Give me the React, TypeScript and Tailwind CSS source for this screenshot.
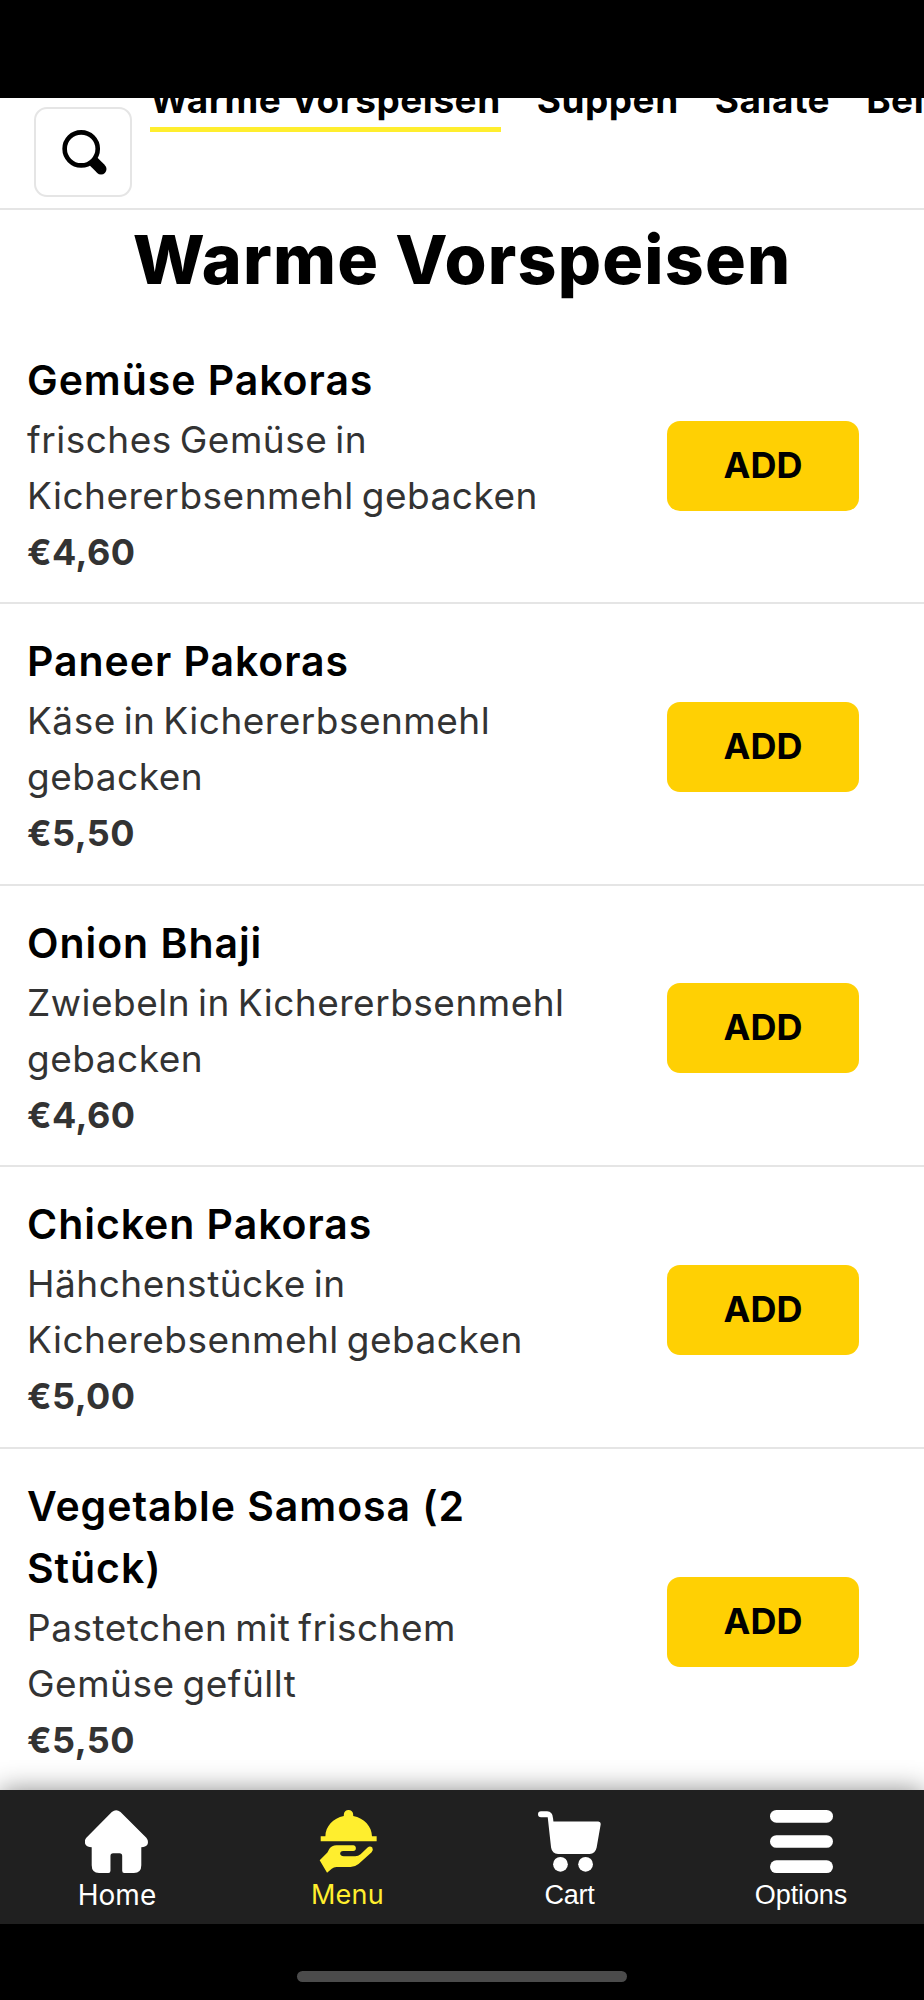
import { useState } from "react";

type Dish = {
  name: string[];
  description: string[];
  price: string;
};

const categories = ["Warme Vorspeisen", "Suppen", "Salate", "Beilagen"];

const dishes: Dish[] = [
  { name: ["Gemüse Pakoras"], description: ["frisches Gemüse in", "Kichererbsenmehl gebacken"], price: "€4,60" },
  { name: ["Paneer Pakoras"], description: ["Käse in Kichererbsenmehl", "gebacken"], price: "€5,50" },
  { name: ["Onion Bhaji"], description: ["Zwiebeln in Kichererbsenmehl", "gebacken"], price: "€4,60" },
  { name: ["Chicken Pakoras"], description: ["Hähchenstücke in", "Kicherebsenmehl gebacken"], price: "€5,00" },
  { name: ["Vegetable Samosa (2", "Stück)"], description: ["Pastetchen mit frischem", "Gemüse gefüllt"], price: "€5,50" },
];

function SearchIcon() {
  return (
    <svg viewBox="0 0 136 136" className="ml-0.5 h-[45px] w-[45px]" fill="none" stroke="black">
      <circle cx="58" cy="57" r="50" strokeWidth="14" />
      <path d="M94 94L117 117" strokeWidth="33" />
      <circle cx="118" cy="118" r="8.5" strokeWidth="16" />
    </svg>
  );
}

function HomeIcon() {
  return (
    <svg viewBox="0 0 188 188" className="mr-0.5 h-[63px] w-[63px]" fill="currentColor">
      <path d="M80 6Q93 -5 106 6L183 83Q191 93 186 104Q181 111 168 111V165Q168 188 146 188H117Q111 188 111 181V137Q111 129 103 129H84Q76 129 76 137V181Q76 188 70 188H42Q20 188 20 165V111Q6 111 2 104Q-4 93 4 83Z" />
    </svg>
  );
}

function MenuIcon() {
  return (
    <svg viewBox="949 120 188 188" className="h-[63px] w-[63px]" fill="currentColor">
      <path d="M1032 138V134A14 14 0 0 1 1060 134V138C1093 144 1116 170 1116 198H1130V213H963V198H977C977 170 1000 144 1032 138Z" />
      <path d="M960 270L983 247L989 236Q996 225 1010 225H1060Q1068 226 1068 234Q1068 242 1060 242H1030Q1021 243 1021 250Q1022 258 1032 258H1066Q1075 258 1082 252L1103 232Q1110 226 1117 232Q1121 239 1115 246L1076 281Q1065 290 1052 290H1010Q1002 290 996 295L982 307Z" />
    </svg>
  );
}

function CartIcon() {
  return (
    <svg viewBox="228 120 188 188" className="h-[63px] w-[63px]" fill="currentColor">
      <path d="M237 124H255Q272 125 273 145L274 154H408Q416 155 415 163L403 232Q399 251 382 251H288Q270 251 267 232L257 142H237A9 9 0 0 1 237 124Z" />
      <circle cx="295" cy="282" r="22" />
      <circle cx="370" cy="282" r="22" />
    </svg>
  );
}

function OptionsIcon() {
  return (
    <svg viewBox="0 0 188 188" className="h-[63px] w-[63px]" fill="currentColor">
      <rect width="188" height="38" rx="19" />
      <rect y="75" width="188" height="38" rx="19" />
      <rect y="150" width="188" height="38" rx="19" />
    </svg>
  );
}

const navItems = [
  { label: "Home", icon: HomeIcon, className: "w-20 text-[28px]" },
  { label: "Menu", icon: MenuIcon, className: "w-[73px] text-[27px] tracking-[0.3px]" },
  { label: "Cart", icon: CartIcon, className: "w-[63px] text-[27px] tracking-[-0.2px] font-['Liberation_Sans',sans-serif]" },
  { label: "Options", icon: OptionsIcon, className: "w-[92px] text-[27px] tracking-[-0.1px] font-['Liberation_Sans',sans-serif]" },
];

function DishRow({ dish }: { dish: Dish }) {
  return (
    <li className="flex items-center justify-between border-b-2 border-[#e5e5e5] pt-[26px] pr-[65px] pb-[22.4px] pl-[27px] last:border-b-0">
      <div className="whitespace-nowrap">
        <h2 className="pb-px text-[41px] leading-[62px] font-semibold tracking-[0.95px] text-black">
          {dish.name.map((line) => (
            <span key={line} className="block">{line}</span>
          ))}
        </h2>
        <p className="text-[37px] leading-[56px] tracking-[0.5px] [word-spacing:-3px] text-[#333]">
          {dish.description.map((line) => (
            <span key={line} className="block">{line}</span>
          ))}
        </p>
        <p className="text-[36px] leading-[56px] font-bold tracking-[0.4px] text-[#333]">{dish.price}</p>
      </div>
      <button className="mt-0.5 h-[90px] w-48 rounded-[13px] bg-[#ffd003] pb-0.5 text-[36px] font-bold text-black">
        ADD
      </button>
    </li>
  );
}

export default function App() {
  const [category, setCategory] = useState("Warme Vorspeisen");
  const [page, setPage] = useState("Menu");

  return (
    <div className="flex h-[2000px] w-[924px] flex-col overflow-hidden bg-white font-['Inter',sans-serif]">
      <div className="h-[98px] shrink-0 bg-black" />

      <header className="flex h-28 shrink-0 items-start overflow-hidden border-b-2 border-[#e5e5e5] pl-[34px]">
        <button className="mt-[9px] flex h-[90px] w-[98px] shrink-0 items-center justify-center rounded-[13px] border-2 border-[#e5e5e5]">
          <SearchIcon />
        </button>
        <nav className="-mt-[26px] ml-[18px] flex gap-[36px] text-[37px] leading-[53px] font-bold tracking-[0.5px] whitespace-nowrap">
          {categories.map((item) => (
            <button
              key={item}
              onClick={() => setCategory(item)}
              className={`h-[60px] border-b-[5px] ${category === item ? "border-[#ffee2e]" : "border-transparent"}`}
            >
              {item}
            </button>
          ))}
        </nav>
      </header>

      <main className="h-[1580px] shrink-0 overflow-hidden">
        <h1 className="h-[113px] text-center text-[68px] leading-[99px] font-extrabold tracking-[1.2px] text-black">{category}</h1>
        <ul>
          {dishes.map((dish) => (
            <DishRow key={dish.name[0]} dish={dish} />
          ))}
        </ul>
      </main>

      <nav className="relative z-10 flex h-[134px] shrink-0 justify-around bg-[#202020] shadow-[0_0_25px_rgba(0,0,0,0.45)]">
        {navItems.map(({ label, icon: Icon, className }) => (
          <button
            key={label}
            onClick={() => setPage(label)}
            className={`flex flex-col items-center pt-5 leading-[44px] ${className} ${page === label ? "text-[#ffee2e]" : "text-white"}`}
          >
            <Icon />
            <span>{label}</span>
          </button>
        ))}
      </nav>

      <footer className="relative z-20 flex grow justify-center bg-black pt-[47px]">
        <div className="h-[11px] w-[330px] rounded-full bg-[#4b4b4b]" />
      </footer>
    </div>
  );
}
